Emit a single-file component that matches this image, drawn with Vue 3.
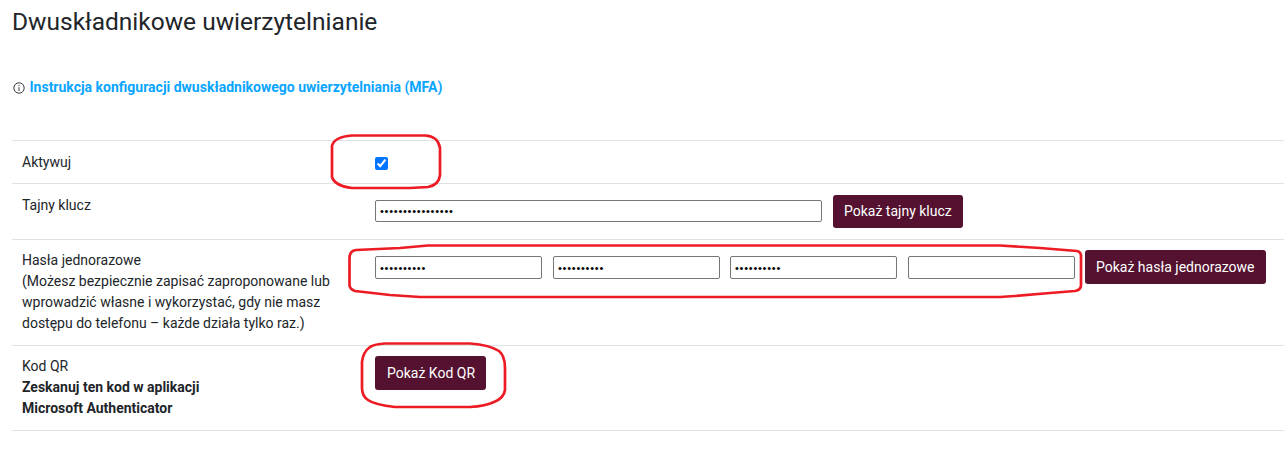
<script setup>
const otps = ['••••••••••', '••••••••••', '••••••••••', ''];
</script>

<template>
  <main class="page">
    <h1 class="title">Dwuskładnikowe uwierzytelnianie</h1>
    <p class="info">
      <svg class="info-icon" viewBox="0 0 12 12" aria-hidden="true">
        <circle cx="6" cy="6" r="5.2" />
        <path d="M6 5.200V9M6 3v1.100" />
      </svg>
      <a href="#" class="info-link">Instrukcja konfiguracji dwuskładnikowego uwierzytelniania (MFA)</a>
    </p>

    <section class="table">
      <div class="row">
        <div class="label">Aktywuj</div>
        <div class="value value-check"><input type="checkbox" class="check" checked /></div>
      </div>
      <div class="row">
        <div class="label">Tajny klucz</div>
        <div class="value">
          <input type="password" class="field field-wide" value="0123456789abcdef" />
          <button type="button" class="btn">Pokaż tajny klucz</button>
        </div>
      </div>
      <div class="row row-tight">
        <div class="label">
          Hasła jednorazowe<br />
          (Możesz bezpiecznie zapisać zaproponowane lub wprowadzić własne i wykorzystać, gdy nie masz dostępu do telefonu – każde działa tylko raz.)
        </div>
        <div class="value">
          <input
            v-for="(otp, i) in otps"
            :key="i"
            type="password"
            class="field field-otp"
            :value="otp"
          />
          <button type="button" class="btn btn-tall">Pokaż hasła jednorazowe</button>
        </div>
      </div>
      <div class="row row-tight">
        <div class="label">
          Kod QR<br />
          <strong>Zeskanuj ten kod w aplikacji<br />Microsoft Authenticator</strong>
        </div>
        <div class="value"><button type="button" class="btn btn-tall btn-qr">Pokaż Kod QR</button></div>
      </div>
    </section>

    <svg class="marks" viewBox="0 0 1284 454" aria-hidden="true">
      <path d="M352 135.500H425Q438 136 440 148V175Q439 185 428 187L410 188H352Q335 186 332 177V146Q334 137 352 135.500Z" />
      <path d="M428 245.500H1000L1040 248L1077 251Q1081 252 1081 256V285Q1081 290 1075 291L1050 293L1015 296L1000 297H420L390 295L355 291Q349.500 289 349.500 285V258Q349.500 251 356 250L400 248Z" />
      <path d="M385 343.500H470Q490 345 499 351Q505 356 505 368V390Q504 398 494 402Q486 406 470 407H395Q375 405 368 400Q362 396 362 388V362Q363 352 370 347Q375 344 385 343.500Z" />
    </svg>
  </main>
</template>

<style>
html, body { margin: 0; background: #fff; }
</style>

<style scoped>
.page {
  position: relative;
  height: 454px;
  padding: 7px 0 0 12px;
  box-sizing: border-box;
  overflow: hidden;
  font-family: Roboto, sans-serif;
  font-size: 14px;
  line-height: 21px;
  color: #212529;
}
.title {
  margin: 0;
  font-size: 24.5px;
  font-weight: 400;
  line-height: 29px;
}
.info {
  display: flex;
  align-items: center;
  gap: 4.500px;
  margin: 41px 0 0 1px;
  height: 21px;
}
.info-icon {
  width: 12px;
  height: 12px;
  flex: none;
  fill: none;
  stroke: #212529;
  stroke-width: 0.9;
}
.info-link {
  color: #0aa5ff;
  font-weight: 700;
  text-decoration: none;
}
.table {
  margin-top: 42px;
  border-bottom: 1px solid #dee2e6;
}
.row {
  display: flex;
  border-top: 1px solid #dee2e6;
}
.label {
  flex: none;
  box-sizing: border-box;
  width: 351px;
  padding: 11px 10px 10px;
}
.value {
  display: flex;
  align-items: flex-start;
  padding: 11px 0 11px 12px;
}
.row-tight .label {
  padding-top: 10px;
  padding-bottom: 11px;
}
.row-tight .value {
  padding-top: 10px;
}
.value-check {
  padding-top: 16px;
  padding-bottom: 0;
}
.check {
  width: 13px;
  height: 13px;
  margin: 0;
}
.field {
  box-sizing: border-box;
  height: 22px;
  margin: 5px 11px 0 0;
  padding: 1px 3px 1px 4px;
  border: 1px solid #767676;
  border-radius: 2px;
  background: #fff;
  font-family: "Liberation Sans", sans-serif;
  font-size: 11px;
  letter-spacing: 0.75px;
}
.field-wide {
  width: 447px;
}
.field-otp {
  width: 167px;
  height: 23px;
  margin-top: 6px;
}
.field-otp:nth-child(2),
.field-otp:nth-child(4) {
  margin-right: 10px;
}
.btn {
  height: 33px;
  padding: 0 11px;
  border: 0;
  border-radius: 3px;
  background: #541230;
  color: #fff;
  font: 14px/21px Roboto, sans-serif;
  white-space: nowrap;
}
.btn-tall {
  height: 34px;
}
.btn-qr {
  padding: 0 12px;
  width: 111px;
}
.marks {
  position: absolute;
  inset: 0;
  width: 1284px;
  height: 454px;
  pointer-events: none;
  fill: none;
  stroke: #ed1c24;
  stroke-width: 2.7;
}
</style>
